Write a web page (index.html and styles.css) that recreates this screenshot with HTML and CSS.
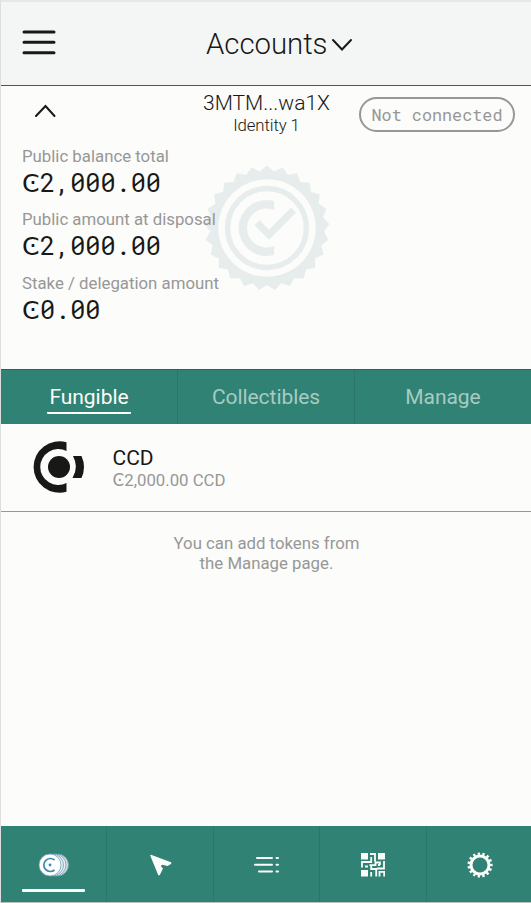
FILE: index.html
```html
<!DOCTYPE html>
<html lang="en">
<head>
<meta charset="utf-8">
<title>Accounts</title>
<link rel="stylesheet" href="styles.css">
</head>
<body>
<div class="wallet">
  <header class="header">
    <svg class="menu" viewBox="0 0 34 26"><path d="M2 3h30M2 13.3h30M2 23.8h30"/></svg>
    <h1 class="title">Accounts</h1>
    <svg class="chevron" viewBox="0 0 22 14"><path d="M2 2l9 9.5L20 2"/></svg>
  </header>
  <section class="account">
    <svg class="collapse" viewBox="0 0 22 14"><path d="M2 12L11.500 2l9 10"/></svg>
    <div class="identity"><div class="address">3MTM...wa1X</div><div class="name">Identity 1</div></div>
    <div class="status">Not connected</div>
    <svg class="seal" viewBox="-63 -63 126 126">
      <polygon id="seal-edge" points=""/>
      <circle class="gap" r="48.7"/>
      <circle class="ring" r="39.4"/>
      <path class="letter" d="M7 -27A28 28 0 1 0 7 27V18A19.500 19.500 0 1 1 7 -18Z"/>
      <path class="check" d="M-7.500 -2.800L2 6.700L24 -15.300"/>
    </svg>
    <dl class="balances">
      <dt>Public balance total</dt><dd><span class="coin">Ͼ</span>2,000.00</dd>
      <dt>Public amount at disposal</dt><dd><span class="coin">Ͼ</span>2,000.00</dd>
      <dt>Stake / delegation amount</dt><dd><span class="coin">Ͼ</span>0.00</dd>
    </dl>
  </section>
  <nav class="tabs">
    <a class="tab active"><span>Fungible</span></a><a class="tab"><span>Collectibles</span></a><a class="tab"><span>Manage</span></a>
  </nav>
  <div class="token">
    <svg class="logo" viewBox="0 0 52 52"><circle cx="26" cy="26" r="11"/><path d="M33.500 1.200A25.800 25.800 0 1 0 33.500 50.800V42A18 18 0 1 1 33.500 10Z"/><path d="M40 15h8.500Q53.500 26 48.500 37H39.500Q46 26 40 15Z"/></svg>
    <div><div class="token-name">CCD</div><div class="token-amount">Ͼ2,000.00 CCD</div></div>
  </div>
  <p class="hint">You can add tokens from<br>the Manage page.</p>
  <footer class="nav">
    <a class="item active"><svg class="coins" viewBox="0 0 32 24"><circle class="c3" cx="19.500" cy="12" r="11"/><circle class="c2" cx="17" cy="12" r="11"/><circle class="c2" cx="14.500" cy="12" r="11"/><circle class="c1" cx="12" cy="12" r="11"/><path d="M16.500 7A6.500 6.500 0 1 0 16.500 17"/><circle class="dot" cx="12" cy="12" r="1.400"/></svg></a>
    <a class="item"><svg class="send" viewBox="0 0 22 22"><path d="M1 .7L21 8.300Q22 9 21 10L17.500 12 12.500 10.700 10.700 12 13 14.500 9.800 21Q8.700 22 8 20.500L.4 2Q0 .5 1 .7Z"/></svg></a>
    <a class="item"><svg class="list" viewBox="0 0 26 18"><path d="M3 2h15M1 8.700h17M5 15.500h13M22.500 2h1.500M22.500 8.700h1.500M22.500 15.500h1.500"/></svg></a>
    <a class="item"><svg class="qr" viewBox="0 0 24 24"><path class="solid" d="M0 0h7v6.500H0zM17 0h7v6.500h-7zM0 17h7v6.500H0zM4 12.500h3v2H4z"/><path d="M9 1h5v7.500M10.200 4v5H1v5.500M8.500 12.200h6V9.500h4.500v2.500M23 8v7.500h-7M10.200 12v4h5v7.500M10.200 23.500v-4.500M18.500 23.500v-4.700h4.700v4.700M19 12h-2"/></svg></a>
    <a class="item"><svg class="gear" viewBox="-13 -13 26 26"><circle class="body" r="9"/><circle class="teeth" r="11.200" pathLength="75"/></svg></a>
  </footer>
</div>
<script src="seal.js"></script>
</body>
</html>
```
FILE: seal.js
```js
// Serrated edge of the seal: 25 points around the centre.
const points = [];
for (let i = 0; i < 50; i++) {
  const radius = i % 2 ? 57 : 62.5;
  const angle = i * Math.PI / 25;
  points.push((radius * Math.sin(angle)).toFixed(2) + ',' + (-radius * Math.cos(angle)).toFixed(2));
}
document.getElementById('seal-edge').setAttribute('points', points.join(' '));
```
FILE: styles.css
```css
* { box-sizing: border-box; }
body { margin: 0; background: #fcfcfa; color: #181816; font-family: Roboto, "DejaVu Sans", sans-serif; }
svg { display: block; flex: none; fill: none; }
.wallet { height: 903px; display: flex; flex-direction: column; border-top: 2px solid #e6e7e6; border-left: 1px solid #dedede; border-bottom: 1px solid #b9c0bd; }
.header { height: 84px; flex: none; display: flex; align-items: center; background: #f4f6f5; border-bottom: 1px solid #2c6468; padding-left: 21px; }
.menu { width: 34px; height: 26px; stroke: #181816; stroke-width: 3; stroke-linecap: round; margin-top: -3px; }
.title { margin: 0 0 0 150px; width: 121px; font-size: 29.4px; line-height: 36px; font-weight: 300; letter-spacing: -.05px; white-space: nowrap; }
.chevron { width: 22px; height: 14px; margin: 3px 0 0 4px; stroke: #181816; stroke-width: 2; stroke-linecap: round; }
.account { position: relative; height: 283px; flex: none; display: grid; grid-template-columns: 182px 167px 1fr; grid-template-rows: 60px 1fr; align-items: start; }
.collapse { width: 22px; height: 14px; margin: 18px 0 0 33px; stroke: #181816; stroke-width: 2; stroke-linecap: round; }
.identity { text-align: center; font-weight: 300; padding-top: 5px; }
.address { font-size: 21px; line-height: 25px; }
.name { font-size: 16.800px; line-height: 19px; letter-spacing: -.1px; }
.status { width: 156px; height: 35px; margin: 11px 0 0 9px; border: 2px solid #979797; border-radius: 18px; color: #979797; text-align: center; font: 16.8px/32px "Roboto Mono", "Liberation Mono", monospace; }
.seal { position: absolute; left: 203px; top: 79px; width: 126px; height: 126px; }
.seal polygon { fill: #e7eded; }
.seal .gap { fill: #fcfcfa; }
.seal .ring { stroke: #e7eded; stroke-width: 5.500; }
.seal .letter { fill: #e7eded; }
.seal .check { stroke: #e7eded; stroke-width: 7; stroke-linecap: square; }
.balances { position: relative; grid-column: 1 / -1; margin: 0; padding-left: 21px; }
.balances dt { color: #979797; font-size: 16.8px; line-height: 20px; }
.balances dd { margin: 0; height: 43.4px; font: 400 25.200px/34px "Roboto Mono", "Liberation Mono", monospace; }
.coin { display: inline-block; width: 18px; font-family: Roboto, "DejaVu Sans", sans-serif; }
.tabs { height: 55px; flex: none; display: grid; grid-template-columns: 176px 177px 1fr; background: #308274; border-top: 1px solid #2c5f68; }
.tab { display: flex; justify-content: center; align-items: start; padding-top: 12px; color: #a8cbc2; font-size: 21px; line-height: 30px; letter-spacing: -.05px; }
.tab + .tab, .item + .item { border-left: 1px solid #2b7668; }
.tab span { padding: 0 2.500px; height: 32px; border-bottom: 2px solid transparent; }
.tab.active { color: #fcfcfa; }
.tab.active span { border-color: #fcfcfa; border-radius: 1px; }
.token { height: 88px; flex: none; display: flex; border-bottom: 1px solid #979797; padding: 17px 0 0 32px; }
.logo { width: 52px; height: 52px; fill: #181816; margin-right: 27.500px; }
.token-name { font-size: 21px; line-height: 25px; margin-top: 5px; }
.token-amount { font-size: 16.800px; line-height: 20px; margin-top: -1px; color: #979797; }
.hint { flex: 1; margin: 21px 0 0; padding-left: 1px; text-align: center; font-size: 16.800px; line-height: 20px; color: #979797; }
.nav { height: 76px; flex: none; display: grid; grid-template-columns: 105px 107px 106px 107px 1fr; background: #308274; }
.item { position: relative; display: flex; justify-content: center; align-items: center; padding-top: 1px; }
.item.active::after { content: ""; position: absolute; left: 21px; right: 21px; bottom: 10px; height: 3px; background: #fcfcfa; border-radius: 1px; }
.coins { width: 32px; height: 24px; }
.coins circle { stroke: #6a9bb5; stroke-width: .8; }
.coins .c1 { fill: #fff; }
.coins .c2 { fill: #eceff2; }
.coins .c3 { fill: #d9dde1; }
.coins path { stroke: #3e88b0; stroke-width: 1.700; }
.coins .dot { fill: #3e88b0; stroke: none; }
.send { width: 22px; height: 22px; margin-left: 1px; fill: #fcfcfa; }
.list { width: 26px; height: 18px; stroke: #fcfcfa; stroke-width: 2; stroke-linecap: round; }
.qr { width: 24px; height: 24px; stroke: #fcfcfa; stroke-width: 1.800; }
.qr .solid { fill: #fcfcfa; stroke: none; }
.gear { width: 26px; height: 26px; margin-left: 1px; stroke: #fcfcfa; }
.gear .body { stroke-width: 3; }
.gear .teeth { stroke-width: 2.800; stroke-dasharray: 2.500 2.500; stroke-dashoffset: 1.250; }
```
